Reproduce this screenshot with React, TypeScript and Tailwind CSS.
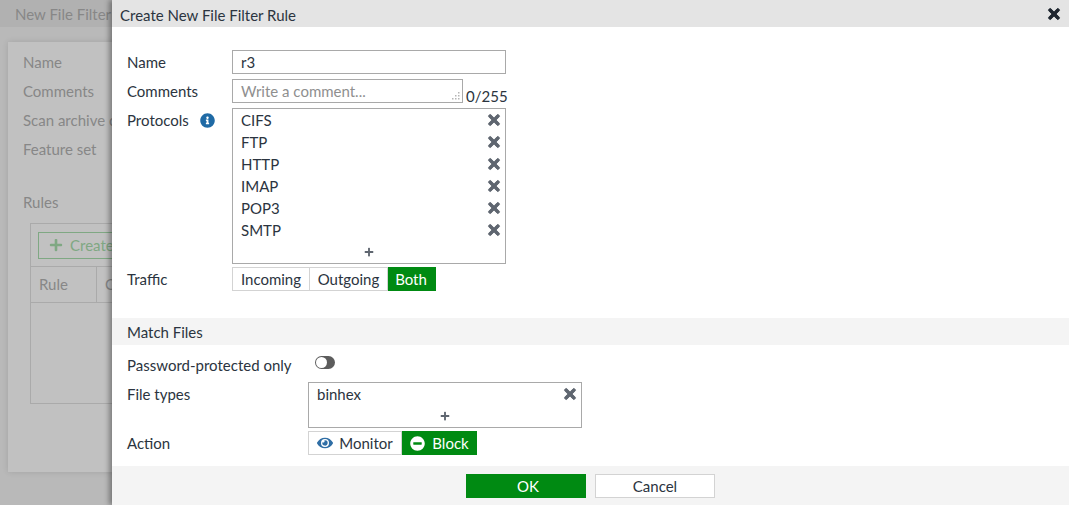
import React from "react";
import { FaEye, FaInfoCircle, FaMinusCircle, FaPlus, FaTimes } from "react-icons/fa";

const protocols = ["CIFS", "FTP", "HTTP", "IMAP", "POP3", "SMTP"];

const Row: React.FC<{ label: React.ReactNode; width: string; className?: string; children: React.ReactNode }> = ({
  label,
  width,
  className,
  children,
}) => (
  <div className={`flex items-start ${className ?? ""}`}>
    <div className={`${width} shrink-0 h-[24px] leading-[24px] flex items-center`}>{label}</div>
    {children}
  </div>
);

const EntryRow: React.FC<{ name: string }> = ({ name }) => (
  <div className="flex h-[22px] items-center justify-between pl-[8px] pr-[3px]">
    <span>{name}</span>
    <FaTimes className="text-[16px] stroke-[30] text-[#5f6670]" />
  </div>
);

const AddRow = () => (
  <div className="flex h-[22px] items-center justify-center">
    <FaPlus className="text-[10px] text-[#5f6670]" />
  </div>
);

// Dimmed page behind the dialog
const Background = () => (
  <div className="h-full w-[112px] overflow-hidden bg-[#b9b9b9] text-[#878787]">
    <div className="h-[27px] w-[300px] bg-[#b1b1b1] pl-[15px] leading-[29px]">New File Filter</div>
    <div className="ml-[8px] mt-[15px] h-[430px] w-[300px] bg-[#c1c1c1] pl-[15px] pt-[8px] shadow-[0_0_6px_rgba(0,0,0,0.12)]">
      <div className="h-[29px] leading-[24px]">Name</div>
      <div className="h-[29px] leading-[24px]">Comments</div>
      <div className="h-[29px] leading-[24px]">Scan archive contents</div>
      <div className="h-[29px] leading-[24px]">Feature set</div>
      <div className="mt-[24px] h-[24px] leading-[24px]">Rules</div>
      <div className="ml-[7px] mt-[9px] h-[181px] w-[300px] border border-[#aaaaaa]">
        <div className="flex h-[43px] items-center border-b border-[#aaaaaa] pl-[7px]">
          <div className="flex h-[27px] w-[200px] items-center border border-[#7fa883] pl-[10px] text-[#7fa883]">
            <FaPlus className="mr-[7px] text-[14px]" />
            Create New
          </div>
        </div>
        <div className="flex h-[36px] items-center border-b border-[#aaaaaa]">
          <div className="flex h-full w-[66px] items-center border-r border-[#aaaaaa] pl-[8px]">Rule</div>
          <div className="pl-[8px]">Comments</div>
        </div>
      </div>
    </div>
  </div>
);

export default function App() {
  return (
    <div className="relative h-[505px] w-[1069px] overflow-hidden bg-white text-[15px] text-[#2b3440] font-['Lato','Open_Sans',sans-serif]">
      <Background />
      <div className="absolute inset-y-0 left-[112px] right-0 flex flex-col bg-white shadow-[-3px_0_5px_rgba(0,0,0,0.35)]">
        <div className="flex h-[27px] shrink-0 items-center justify-between bg-[#e4e4e4] pl-[8px] pr-[7px]">
          <span className="relative top-[2px]">Create New File Filter Rule</span>
          <FaTimes className="text-[16px] stroke-[30] text-[#1f2630]" />
        </div>

        <div className="flex flex-1 flex-col">
          <div className="pl-[15px] pt-[23px]">
            <Row label="Name" width="w-[105px]" className="mb-[5px]">
              <div className="h-[24px] w-[274px] border border-[#a9a9a9] pl-[8px] leading-[22px]">r3</div>
            </Row>
            <Row label="Comments" width="w-[105px]" className="mb-[5px]">
              <div className="relative h-[24px] w-[231px] border border-[#a9a9a9] pl-[8px] leading-[22px] text-[#8f8f8f]">
                Write a comment...
                <svg className="absolute bottom-[2px] right-[2px]" width="9" height="9" viewBox="0 0 9 9" fill="#b5b5b5">
                  <rect x="7" y="1" width="1.5" height="1.5" />
                  <rect x="4" y="4" width="1.5" height="1.5" />
                  <rect x="7" y="4" width="1.5" height="1.5" />
                  <rect x="1" y="7" width="1.5" height="1.5" />
                  <rect x="4" y="7" width="1.5" height="1.5" />
                  <rect x="7" y="7" width="1.5" height="1.5" />
                </svg>
              </div>
              <span className="ml-[3px] mt-[6px] h-[18px] leading-[22px]">0/255</span>
            </Row>
            <Row
              label={
                <>
                  Protocols
                  <FaInfoCircle className="ml-[11px] text-[15px] text-[#1f6aa5]" />
                </>
              }
              width="w-[105px]"
              className="mb-[3px]"
            >
              <div className="h-[156px] w-[274px] border border-[#a9a9a9]">
                {protocols.map((p) => (
                  <EntryRow key={p} name={p} />
                ))}
                <AddRow />
              </div>
            </Row>
            <Row label="Traffic" width="w-[105px]">
              <div className="flex h-[24px] leading-[24px]">
                <div className="w-[78px] border border-[#d3d3d3] text-center leading-[22px]">Incoming</div>
                <div className="w-[78px] border-y border-r border-[#d3d3d3] text-center leading-[22px]">Outgoing</div>
                <div className="w-[48px] bg-[#008a12] pr-[2px] text-center text-white">Both</div>
              </div>
            </Row>
          </div>

          <div className="mt-[27px] h-[27px] bg-[#f4f4f4] pl-[15px] leading-[28px]">Match Files</div>

          <div className="pl-[15px] pt-[8px]">
            <Row label="Password-protected only" width="w-[181px]" className="mb-[5px]">
              <div className="ml-[7px] mt-[3px] flex h-[13px] w-[20px] items-center rounded-full bg-[#5c5c5c] pl-[1px] pr-[8px]">
                <div className="h-[11px] w-[11px] shrink-0 rounded-full bg-white" />
              </div>
            </Row>
            <Row label="File types" width="w-[181px]" className="mb-[3px]">
              <div className="h-[46px] w-[274px] border border-[#a9a9a9]">
                <EntryRow name="binhex" />
                <AddRow />
              </div>
            </Row>
            <Row label="Action" width="w-[181px]">
              <div className="flex h-[24px]">
                <div className="flex w-[94px] items-center justify-center border border-[#d3d3d3]">
                  <FaEye className="mr-[6px] text-[16px] text-[#2f6ea5]" />
                  Monitor
                </div>
                <div className="flex w-[75px] items-center justify-center bg-[#008a12] text-white">
                  <FaMinusCircle className="mr-[7px] text-[15px]" />
                  Block
                </div>
              </div>
            </Row>
          </div>
        </div>

        <div className="flex h-[39px] shrink-0 items-start justify-center gap-[9px] bg-[#f4f4f4] pt-[8px]">
          <div className="h-[24px] w-[120px] bg-[#008a12] pl-[4px] text-center leading-[25px] text-white">OK</div>
          <div className="h-[24px] w-[120px] border border-[#d3d3d3] bg-white text-center leading-[23px]">Cancel</div>
        </div>
      </div>
    </div>
  );
}
